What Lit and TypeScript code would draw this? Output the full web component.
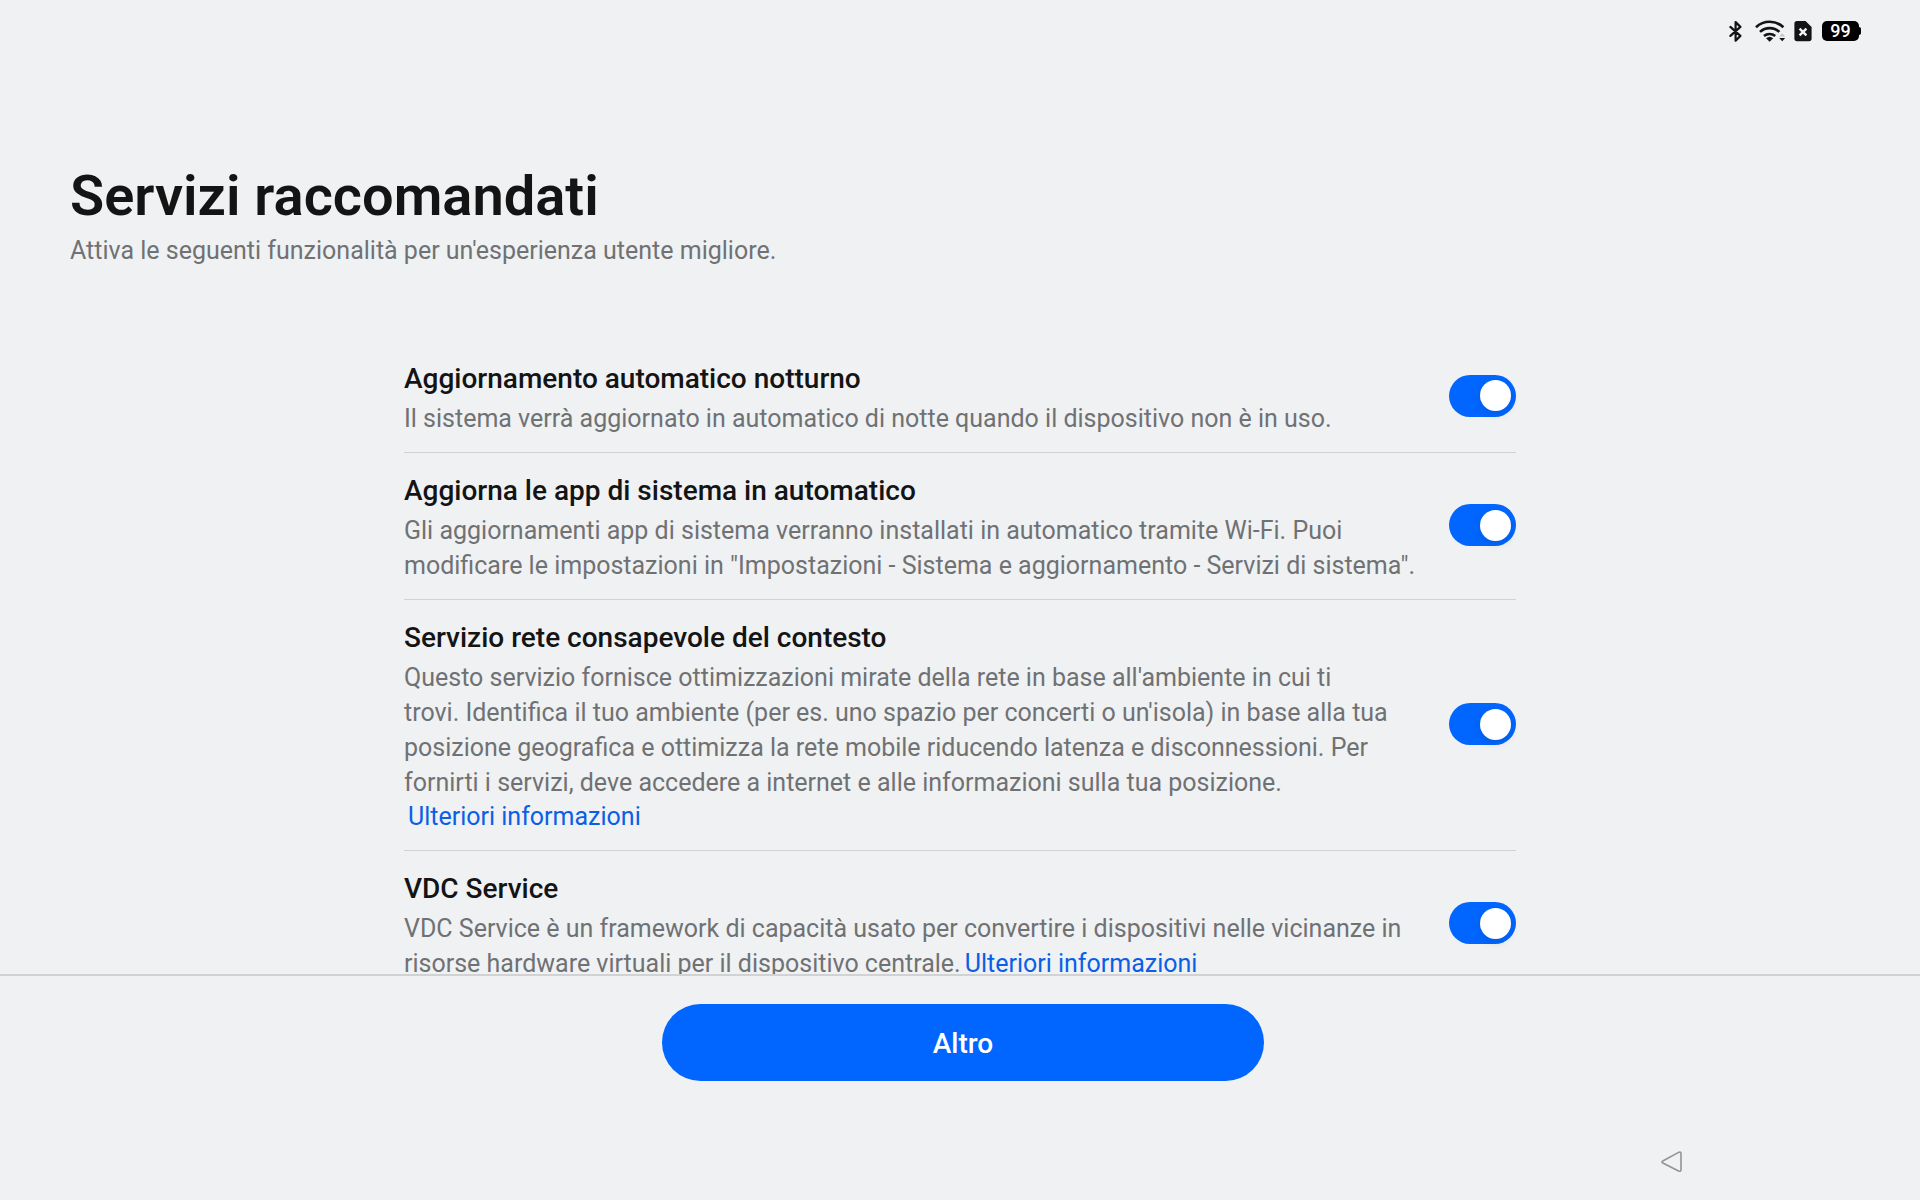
import { LitElement, html, css, nothing } from "lit";
import { customElement, property, state } from "lit/decorators.js";

interface Service {
  id: string;
  title: string;
  lines: string[];
  link?: "inline" | "below";
  enabled: boolean;
}

const SERVICES: Service[] = [
  {
    id: "night-update",
    title: "Aggiornamento automatico notturno",
    lines: ["Il sistema verrà aggiornato in automatico di notte quando il dispositivo non è in uso."],
    enabled: true,
  },
  {
    id: "system-apps",
    title: "Aggiorna le app di sistema in automatico",
    lines: [
      "Gli aggiornamenti app di sistema verranno installati in automatico tramite Wi-Fi. Puoi",
      'modificare le impostazioni in "Impostazioni - Sistema e aggiornamento - Servizi di sistema".',
    ],
    enabled: true,
  },
  {
    id: "context-network",
    title: "Servizio rete consapevole del contesto",
    lines: [
      "Questo servizio fornisce ottimizzazioni mirate della rete in base all'ambiente in cui ti",
      "trovi. Identifica il tuo ambiente (per es. uno spazio per concerti o un'isola) in base alla tua",
      "posizione geografica e ottimizza la rete mobile riducendo latenza e disconnessioni. Per",
      "fornirti i servizi, deve accedere a internet e alle informazioni sulla tua posizione.",
    ],
    link: "below",
    enabled: true,
  },
  {
    id: "vdc",
    title: "VDC Service",
    lines: [
      "VDC Service è un framework di capacità usato per convertire i dispositivi nelle vicinanze in",
      "risorse hardware virtuali per il dispositivo centrale.",
    ],
    link: "inline",
    enabled: true,
  },
];

@customElement("status-bar")
export class StatusBar extends LitElement {
  static styles = css`
    :host {
      display: flex;
      justify-content: flex-end;
      align-items: center;
      height: 62px;
      padding-right: 59px;
      color: #141414;
    }
    svg {
      display: block;
    }
    .bluetooth {
      margin-right: 12px;
    }
    .wifi {
      margin-right: 8px;
    }
    .sim {
      margin-right: 10px;
    }
    .battery {
      display: flex;
      align-items: center;
    }
    .level {
      width: 37px;
      height: 20px;
      border-radius: 5px;
      background: #000;
      color: #fff;
      font-size: 18px;
      font-weight: 500;
      line-height: 20px;
      text-align: center;
    }
    .cap {
      width: 2px;
      height: 8px;
      border-radius: 0 2px 2px 0;
      background: #000;
    }
  `;

  render() {
    return html`
      <svg class="bluetooth" width="15" height="22" viewBox="0 0 15 22" fill="none" stroke="currentColor"
        stroke-width="2.2" stroke-linejoin="round" stroke-linecap="round" role="img" aria-label="Bluetooth">
        <path d="M2.4 6.9 12.4 15.9 7.6 20.7V2.1L12.4 6.9 2.4 15.9" />
      </svg>
      <svg class="wifi" width="31" height="22" viewBox="0 0 31 22" fill="none" stroke="currentColor"
        stroke-width="2.6" role="img" aria-label="Wi-Fi">
        <path d="M1 7.2a20 20 0 0 1 27.4 0M5 11.9a14.4 14.4 0 0 1 19.4 0M9 16a8.6 8.6 0 0 1 11.2 0" />
        <path d="M11 18.2a5.6 5.6 0 0 1 7.2 0L14.6 21.8Z" fill="currentColor" stroke="none" />
        <path d="M24.2 16.6 27.2 13.2 30.2 16.6Z" fill="#c4c5c7" stroke="none" />
        <path d="M24.2 18H30.2L27.2 21.2Z" fill="currentColor" stroke="none" />
      </svg>
      <svg class="sim" width="18" height="22" viewBox="0 0 18 22" role="img" aria-label="Nessuna SIM">
        <path d="M3 1H11.5L17.6 7V18.6a2.6 2.6 0 0 1-2.6 2.6H3a2.6 2.6 0 0 1-2.6-2.6V3.6A2.6 2.6 0 0 1 3 1Z"
          fill="currentColor" />
        <path d="M5.6 8.6l6.8 6.8M12.4 8.6l-6.8 6.8" stroke="#eff1f3" stroke-width="2.4" />
      </svg>
      <div class="battery"><span class="level">99</span><span class="cap"></span></div>
    `;
  }
}

@customElement("service-row")
export class ServiceRow extends LitElement {
  static styles = css`
    :host {
      display: flex;
      align-items: center;
      justify-content: space-between;
      gap: 32px;
      border-bottom: 1px solid #d0d2d4;
    }
    .text {
      padding: 20px 0 16px;
    }
    .title {
      display: block;
      margin-bottom: 4px;
      color: #141414;
      font-size: 28px;
      font-weight: 500;
      line-height: 36px;
    }
    .description {
      margin: 0;
      color: #707173;
      font-size: 25px;
      line-height: 35px;
      white-space: nowrap;
    }
    .more {
      margin-left: 4px;
      color: #0a5fe6;
      text-decoration: none;
    }
    .below {
      display: block;
      line-height: 34px;
    }
    .switch {
      flex: none;
      display: flex;
      align-items: center;
      justify-content: flex-end;
      appearance: none;
      width: 67px;
      height: 42px;
      margin: 0 0 2px;
      padding: 0 5px;
      border-radius: 21px;
      background: #c6c8ca;
      cursor: pointer;
    }
    .switch:not(:checked) {
      justify-content: flex-start;
    }
    .switch:checked {
      background: #0066ff;
    }
    .switch::before {
      content: "";
      width: 31px;
      height: 31px;
      border-radius: 50%;
      background: #fff;
      box-shadow: 0 3px 8px rgba(0, 0, 0, 0.12);
    }
  `;

  @property({ attribute: false }) service!: Service;

  render() {
    const { id, title, lines, link, enabled } = this.service;
    return html`
      <div class="text">
        <label class="title" for=${id}>${title}</label>
        <p class="description">
          ${lines.map((line, i) => html`${i ? html`<br />` : nothing}${line}`)}${link
            ? html`<a class="more ${link}" href="#${id}">Ulteriori informazioni</a>`
            : nothing}
        </p>
      </div>
      <input class="switch" id=${id} type="checkbox" role="switch" .checked=${enabled} />
    `;
  }
}

@customElement("app-root")
export class AppRoot extends LitElement {
  static styles = css`
    :host {
      display: flex;
      flex-direction: column;
      height: 100vh;
      background: #eff1f3;
      font-family: Roboto, "Noto Sans", sans-serif;
    }
    .header {
      padding: 98px 70px 0;
    }
    .heading {
      margin: 0 0 1px;
      color: #141414;
      font-size: 56px;
      font-weight: 600;
      line-height: 72px;
    }
    .subtitle {
      margin: 0;
      color: #707173;
      font-size: 25px;
      line-height: 35px;
    }
    .services {
      flex: 1;
      min-height: 0;
      margin-top: 73px;
      overflow-y: auto;
      scrollbar-width: none;
    }
    .list {
      max-width: 1112px;
      margin: 0 auto;
    }
    .footer {
      display: flex;
      flex-direction: column;
      align-items: center;
      padding: 28px 0 26px 6px;
      border-top: 2px solid #d0d2d4;
    }
    .primary {
      width: 602px;
      height: 77px;
      padding: 2px 0 0;
      border: 0;
      border-radius: 39px;
      background: #0066ff;
      color: #fff;
      font: 500 28px/36px Roboto, "Noto Sans", sans-serif;
      cursor: pointer;
    }
    .navigation {
      display: flex;
      align-self: flex-end;
      margin: 69px 236px 0 0;
    }
    .back {
      display: flex;
      padding: 0;
      border: 0;
      background: none;
      cursor: pointer;
    }
  `;

  @state() private services = SERVICES;

  render() {
    return html`
      <status-bar></status-bar>
      <header class="header">
        <h1 class="heading">Servizi raccomandati</h1>
        <p class="subtitle">Attiva le seguenti funzionalità per un'esperienza utente migliore.</p>
      </header>
      <main class="services">
        <div class="list">
          ${this.services.map((service) => html`<service-row .service=${service}></service-row>`)}
        </div>
      </main>
      <footer class="footer">
        <button class="primary" type="button">Altro</button>
        <nav class="navigation">
          <button class="back" type="button" aria-label="Indietro">
            <svg width="24" height="24" viewBox="0 0 24 24" fill="none" stroke="#929496" stroke-width="1.6"
              stroke-linejoin="round">
              <path d="M2.8 11 18.6 2.4Q21 1.4 21 3.8V19.6Q21 22 18.6 21L2.8 13Q1.2 12 2.8 11Z" />
            </svg>
          </button>
        </nav>
      </footer>
    `;
  }
}
